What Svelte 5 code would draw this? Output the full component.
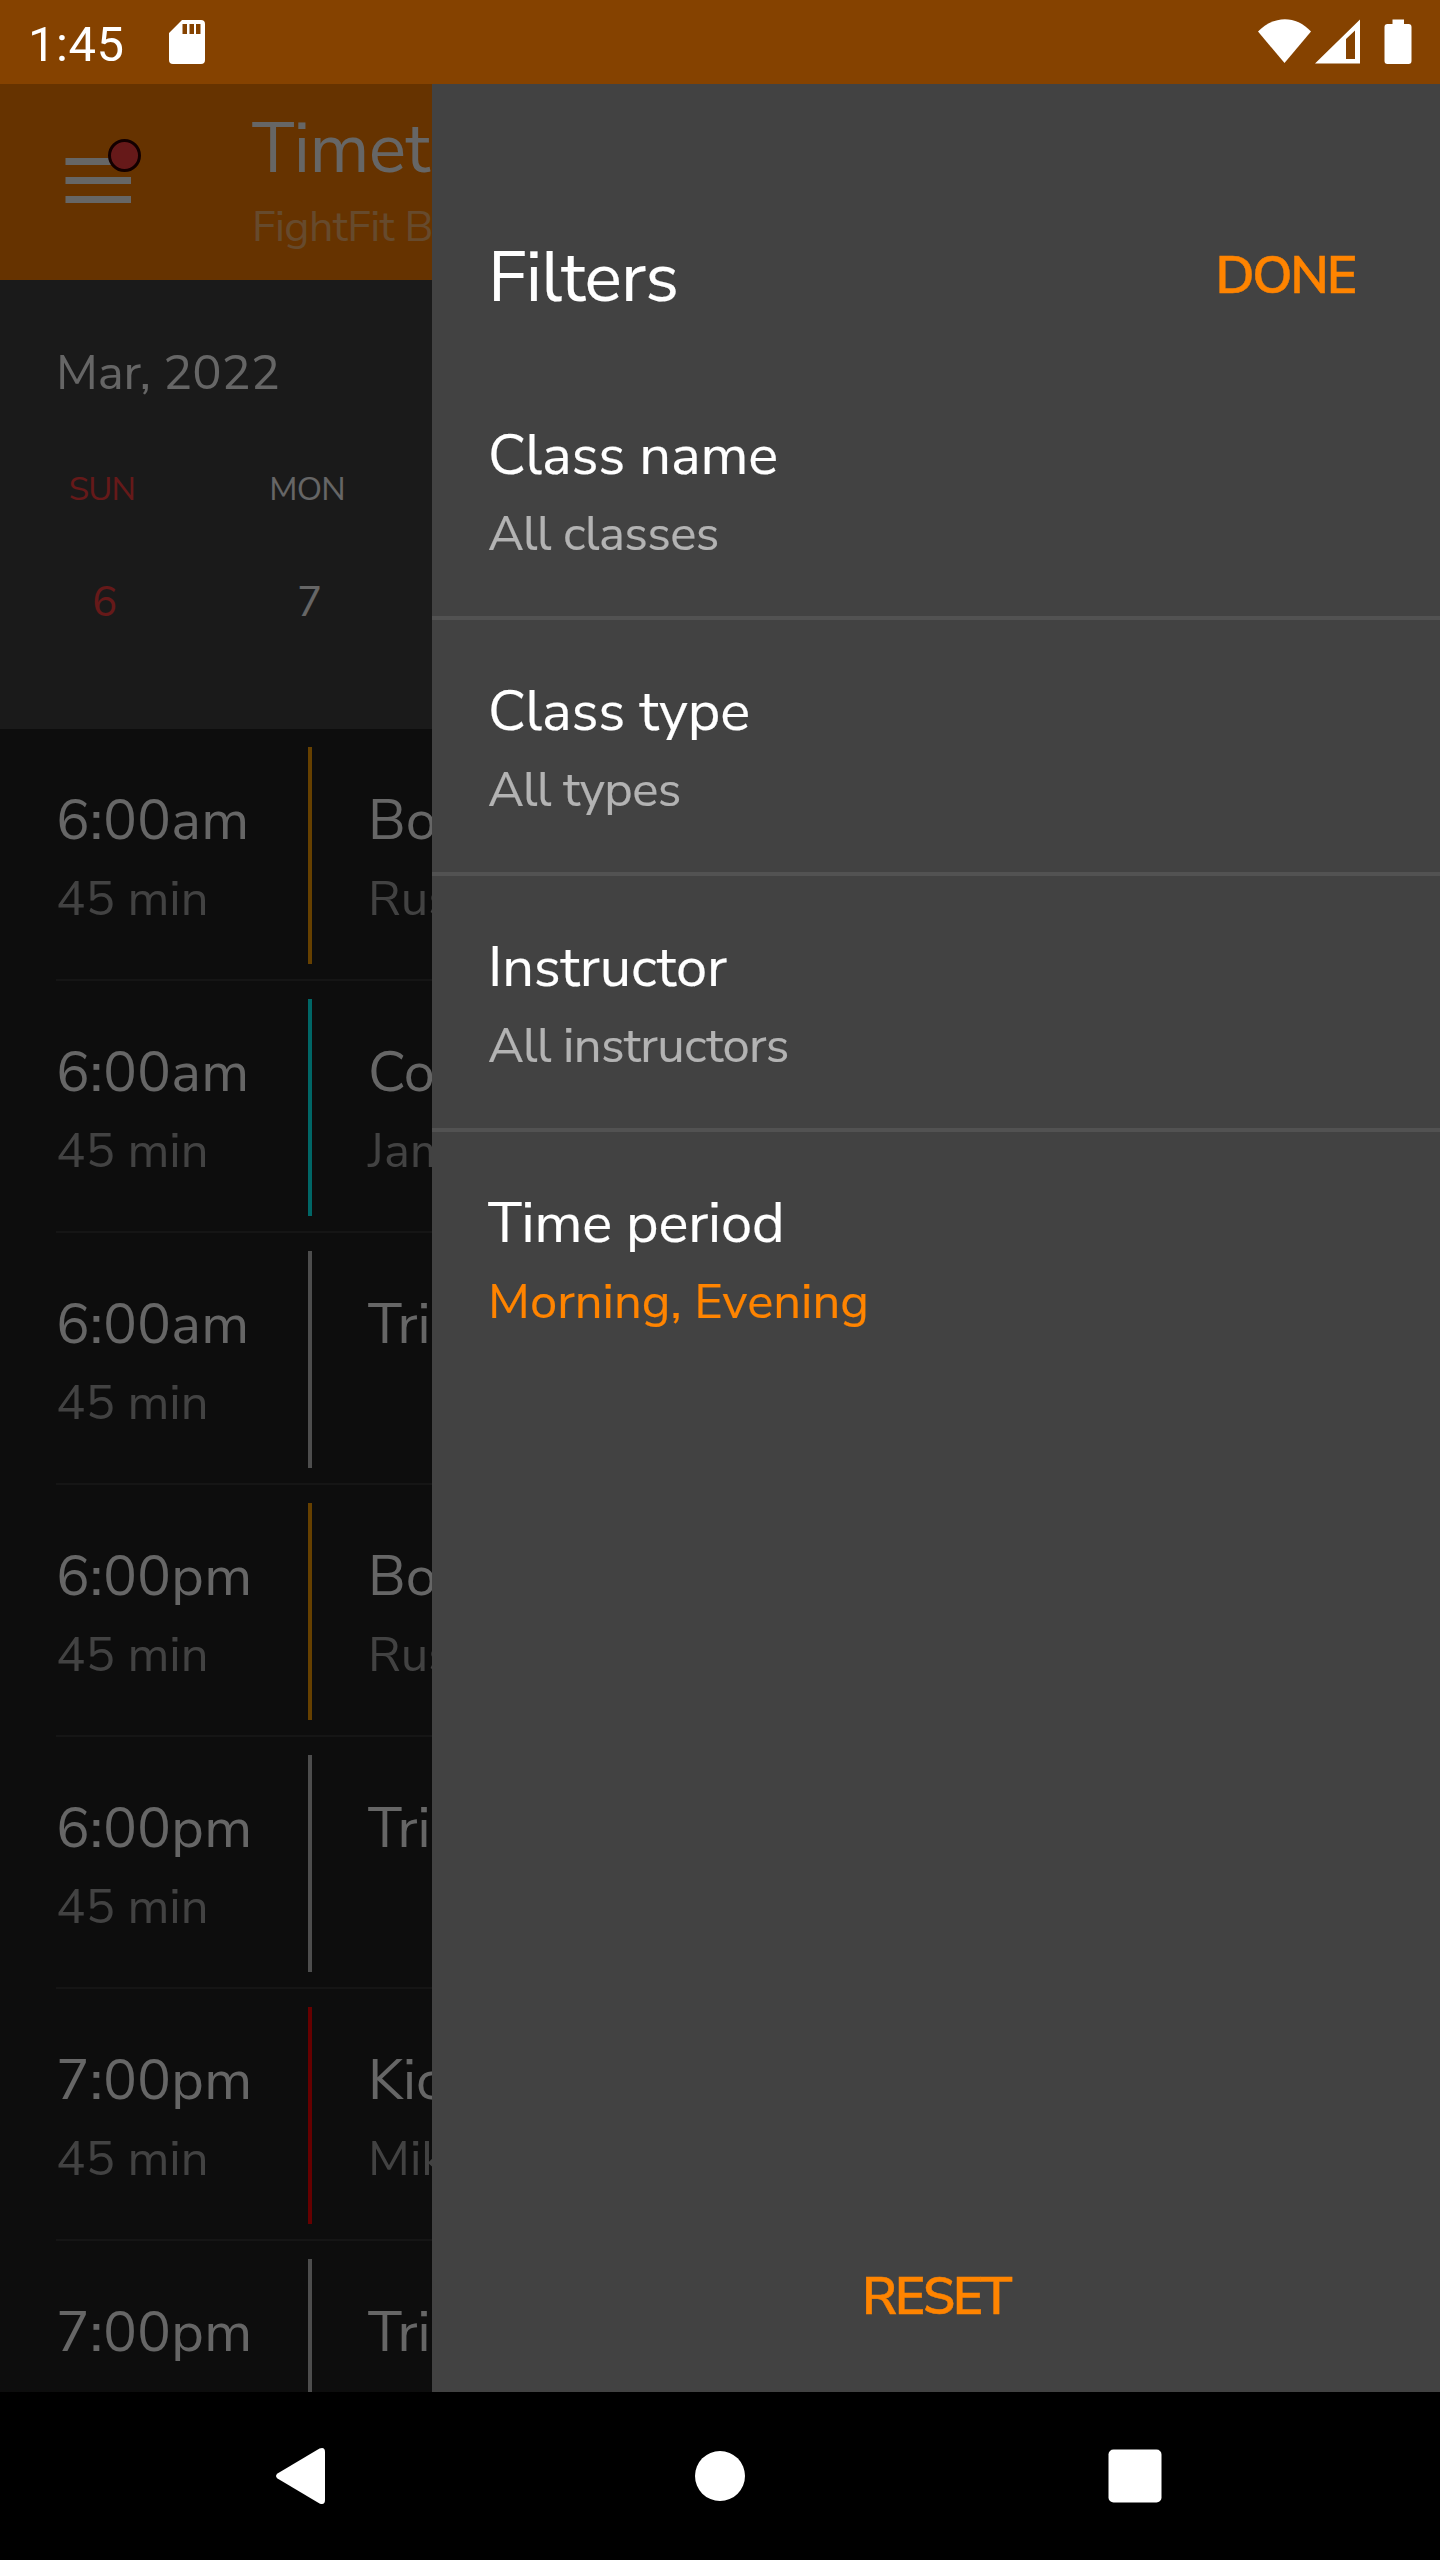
<script>
  const days = [
    { name: "SUN", date: 6, holiday: true },
    { name: "MON", date: 7 },
  ];

  const classes = [
    { time: "6:00am", length: "45 min", name: "Boxing", instructor: "Russell", color: "#ffa000" },
    { time: "6:00am", length: "45 min", name: "Conditioning", instructor: "James", color: "#00ffff" },
    { time: "6:00am", length: "45 min", name: "Trial", color: "#c0c0c0" },
    { time: "6:00pm", length: "45 min", name: "Boxing", instructor: "Russell", color: "#ffa000" },
    { time: "6:00pm", length: "45 min", name: "Trial", color: "#c0c0c0" },
    { time: "7:00pm", length: "45 min", name: "Kickboxing", instructor: "Mike", color: "#ff0000" },
    { time: "7:00pm", length: "", name: "Trial", color: "#c0c0c0" },
  ];

  const filters = [
    { label: "Class name", value: "All classes" },
    { label: "Class type", value: "All types" },
    { label: "Instructor", value: "All instructors" },
    { label: "Time period", value: "Morning, Evening", active: true },
  ];
</script>

<div class="screen">
  <div class="status">
    <span class="clock">1:45</span>
    <svg class="sd" width="36" height="44" viewBox="0 0 36 44">
      <path fill="#fff" fill-rule="evenodd" d="M13 0h19a4 4 0 0 1 4 4v36a4 4 0 0 1-4 4H4a4 4 0 0 1-4-4V13zM13.500 4v10h4.500V4zM20.500 4v10h4.500V4zM27 4v10h4.500V4z" />
    </svg>
    <svg class="system" width="156" height="46" viewBox="0 0 156 46">
      <g fill="#fff">
        <path d="M0 12.500C16-4 38-4 53 12.500L26.500 44z" />
        <path fill-rule="evenodd" d="M57 44.500L102 0.500v44zM88 20v20h9V11.500z" />
        <path d="M134.500 0.500h11.500v4.500h4.500a3 3 0 0 1 3 3v34a3 3 0 0 1-3 3h-21a3 3 0 0 1-3-3V8a3 3 0 0 1 3-3h5z" />
      </g>
    </svg>
  </div>

  <div class="app">
    <header>
      <div class="menu">
        <svg width="80" height="72" viewBox="0 0 80 72">
          <path fill="#fff" d="M0.500 21h65.500v7H0.500zM0.500 40h65.500v7H0.500zM0.500 59h65.500v7H0.500z" />
          <circle cx="59.500" cy="18.500" r="15" fill="#ff4040" stroke="#300000" stroke-width="3" />
        </svg>
      </div>
      <div>
        <div class="title">Timetable</div>
        <div class="subtitle">FightFit Boxing</div>
      </div>
    </header>

    <div class="calendar">
      <div class="month">Mar, 2022</div>
      <div class="days">
        {#each days as day}
          <div class="day" class:holiday={day.holiday}>
            <span class="weekday">{day.name}</span>
            <span class="date">{day.date}</span>
          </div>
        {/each}
      </div>
    </div>

    <div class="list">
      {#each classes as item}
        <div class="row">
          <div class="when">
            <div class="main time">{item.time}</div>
            {#if item.length}
              <div class="sub">{item.length}</div>
            {/if}
          </div>
          <div class="bar" style:background={item.color}></div>
          <div class="what">
            <div class="main">{item.name}</div>
            {#if item.instructor}
              <div class="sub">{item.instructor}</div>
            {/if}
          </div>
        </div>
      {/each}
    </div>

    <div class="scrim"></div>

    <div class="drawer">
      <div class="top">
        <h1>Filters</h1>
        <button>DONE</button>
      </div>
      {#each filters as filter}
        <div class="filter">
          <div class="label">{filter.label}</div>
          <div class="value" class:active={filter.active}>{filter.value}</div>
        </div>
      {/each}
      <button class="reset">RESET</button>
    </div>
  </div>

  <nav>
    <svg width="1440" height="168" viewBox="0 0 1440 168" fill="#fff">
      <path d="M277.500 81.500L319.500 56.500Q325 54.500 325 60V108Q325 113.500 319.500 111.500L277.500 86.500Q274.500 84 277.500 81.500z" />
      <circle cx="720" cy="84" r="25" />
      <rect x="1108.500" y="57.500" width="53" height="53" rx="5" />
    </svg>
  </nav>
</div>

<style>
  :global(body) {
    background: #000;
  }

  .screen {
    width: 1440px;
    height: 2560px;
    display: flex;
    flex-direction: column;
    overflow: hidden;
    font-family: "Nunito Sans", Nunito, "Noto Sans", sans-serif;
    color: #fff;
  }

  .status {
    height: 84px;
    flex: none;
    display: flex;
    align-items: flex-start;
    background: #854200;
  }

  .clock {
    width: 141px;
    padding-left: 28px;
    font: 49px/89px Roboto, sans-serif;
    letter-spacing: 0.5px;
  }

  .sd {
    margin-top: 20px;
  }

  .system {
    margin: 19px 26px 0 auto;
  }

  .app {
    position: relative;
    flex: 1;
    min-height: 0;
    overflow: hidden;
    background: #212121;
  }

  header {
    height: 196px;
    display: flex;
    background: #ff8000;
  }

  .menu {
    width: 188px;
    padding: 53px 0 0 65px;
    box-sizing: border-box;
    flex: none;
    margin-right: 64px;
  }

  .title {
    margin-top: 17px;
    font-size: 70px;
    line-height: 96px;
    letter-spacing: -0.5px;
  }

  .subtitle {
    font-size: 43px;
    line-height: 60px;
    letter-spacing: -0.6px;
    color: #ffb870;
  }

  .calendar {
    height: 449px;
    background: #424242;
  }

  .month {
    padding: 60px 0 0 56px;
    font-size: 49px;
    line-height: 66px;
    letter-spacing: -0.2px;
  }

  .days {
    display: flex;
    margin-top: 59px;
  }

  .day {
    width: 205px;
    display: flex;
    flex-direction: column;
    align-items: center;
  }

  .weekday {
    font-size: 33px;
    line-height: 50px;
    letter-spacing: -0.8px;
    padding-right: 1px;
  }

  .date {
    margin-top: 59px;
    padding-left: 4px;
    font-size: 42px;
    line-height: 58px;
  }

  .holiday {
    color: #ff4040;
  }

  .row {
    height: 252px;
    box-sizing: border-box;
    margin-left: 56px;
    display: flex;
    border-bottom: 2px solid #363636;
  }

  .when {
    width: 252px;
    padding-top: 53px;
  }

  .bar {
    width: 4px;
    margin: 18px 0 15px;
  }

  .what {
    padding: 53px 0 0 56px;
  }

  .main {
    font-size: 56px;
    line-height: 77px;
  }

  .time {
    letter-spacing: 0.4px;
  }

  .sub {
    margin-top: 6px;
    font-size: 49px;
    line-height: 67px;
    color: #a6a6a6;
  }

  .scrim {
    position: absolute;
    inset: 0;
    background: rgba(0, 0, 0, 0.6);
  }

  .drawer {
    position: absolute;
    top: 0;
    right: 0;
    bottom: 0;
    width: 1008px;
    display: flex;
    flex-direction: column;
    background: #424242;
    -webkit-text-stroke: 0.2px;
  }

  .top {
    display: flex;
    justify-content: space-between;
    padding: 146px 85px 0 56px;
    height: 134px;
  }

  h1 {
    margin: 0;
    font-size: 70px;
    font-weight: 400;
    line-height: 96px;
    letter-spacing: -0.6px;
  }

  button {
    padding: 0;
    border: 0;
    background: none;
    font: 600 52px/72px "Nunito Sans", Nunito, sans-serif;
    letter-spacing: -2.3px;
    color: #ff8400;
    -webkit-text-stroke: 0.5px;
  }

  .top button {
    height: 72px;
    margin-top: 10px;
  }

  .filter {
    height: 256px;
    box-sizing: border-box;
    padding: 53px 0 0 56px;
    border-bottom: 4px solid #525252;
  }

  .filter:nth-last-child(2) {
    border: 0;
  }

  .label {
    font-size: 56px;
    line-height: 77px;
    letter-spacing: -0.15px;
  }

  .value {
    margin-top: 6px;
    font-size: 49px;
    line-height: 67px;
    letter-spacing: -0.6px;
    color: #b3b3b3;
  }

  .active {
    letter-spacing: 0;
    color: #ff8400;
  }

  .reset {
    align-self: center;
    margin: auto 0 59px;
  }

  nav {
    height: 168px;
    flex: none;
    background: #000;
  }
</style>
